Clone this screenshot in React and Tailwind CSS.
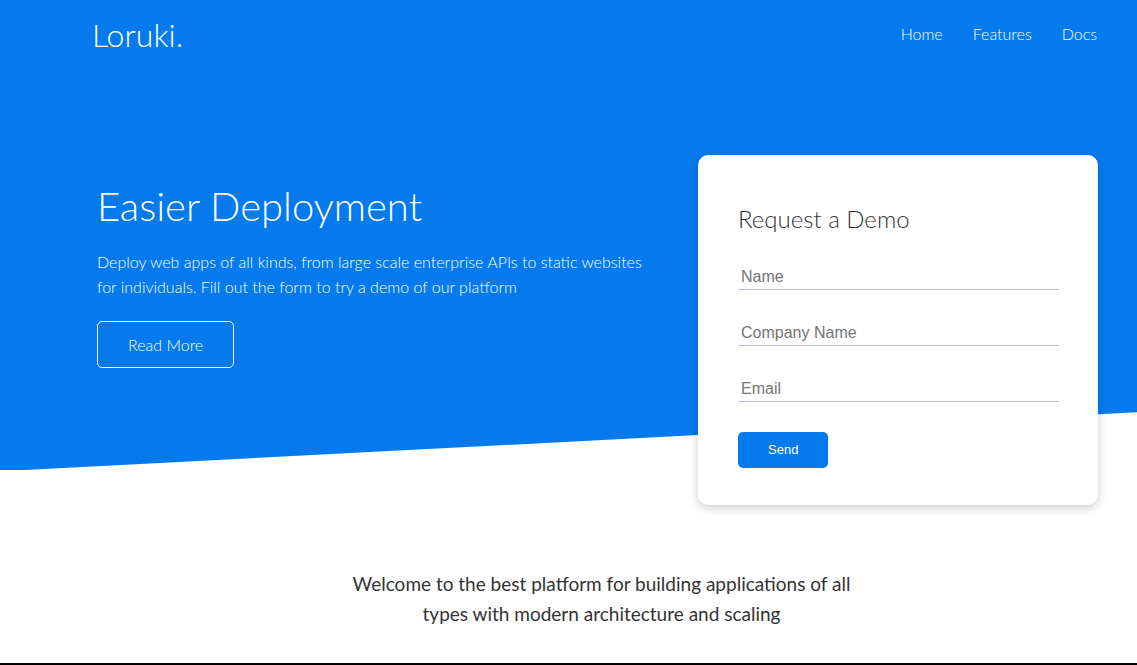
const links = ["Home", "Features", "Docs"];
const fields = [
  { id: "name", label: "Name", type: "text" },
  { id: "company", label: "Company Name", type: "text" },
  { id: "email", label: "Email", type: "email" },
];

function Navbar() {
  return (
    <header className="flex h-[70px] items-center justify-between pr-10 pl-[92px]">
      <h1 className="text-[32px] leading-[38px] font-light">Loruki.</h1>
      <nav>
        <ul className="flex gap-[30px] pb-0.5">
          {links.map((link) => (
            <li key={link}>
              <a href={"#" + link.toLowerCase()} className="text-base font-light">
                {link}
              </a>
            </li>
          ))}
        </ul>
      </nav>
    </header>
  );
}

function DemoForm() {
  return (
    <form
      className="w-[400px] shrink-0 rounded-[10px] bg-white px-10 pt-[49px] pb-[37px] text-[#333] shadow-[0_3px_10px_rgba(0,0,0,0.2)]"
      onSubmit={(e) => e.preventDefault()}
    >
      <h2 className="text-2xl leading-[30px] font-light">Request a Demo</h2>
      <div className="mt-[30px] flex flex-col gap-[30px]">
        {fields.map((field) => (
          <input
            key={field.id}
            id={field.id}
            type={field.type}
            aria-label={field.label}
            placeholder={field.label}
            className="h-[26px] w-full border-b border-[#b4becb] px-[3px] font-['Liberation_Sans',sans-serif] text-base outline-none placeholder:text-[#757575]"
          />
        ))}
      </div>
      <button
        type="submit"
        className="mt-[30px] block h-9 rounded-[5px] bg-[#047aed] px-[30px] font-['Liberation_Sans',sans-serif] text-[13px] text-white"
      >
        Send
      </button>
    </form>
  );
}

function Showcase() {
  return (
    <main className="flex items-start justify-between gap-8 pt-[85px] pr-[39px] pl-[97px]">
      <section className="max-w-[560px] pt-[27px] text-white">
        <h2 className="text-[40px] leading-[48px] font-light">Easier Deployment</h2>
        <p className="mt-[19px] mb-[22px] text-base leading-[25px] font-light">
          Deploy web apps of all kinds, from large scale enterprise APIs to static websites for
          individuals. Fill out the form to try a demo of our platform
        </p>
        <a
          href="#features"
          className="inline-block rounded-[5px] border border-white px-[30px] py-2.5 text-base leading-[25px] font-light"
        >
          Read More
        </a>
      </section>
      <DemoForm />
    </main>
  );
}

export default function App() {
  return (
    <div className="min-h-screen bg-white font-[Lato,sans-serif] text-[#333]">
      <div className="relative isolate">
        <div
          aria-hidden="true"
          className="absolute inset-x-0 top-0 -z-10 h-[470px] bg-[#047aed] [clip-path:polygon(0_0,100%_0,100%_87.7%,2.2%_100%,0_100%)]"
        />
        <div className="text-white">
          <Navbar />
        </div>
        <Showcase />
      </div>
      <section className="pt-16 pb-[34px] pl-[66px]">
        <h3 className="mx-auto max-w-[510px] text-center text-[19px] leading-[30px]">
          Welcome to the best platform for building applications of all types with modern
          architecture and scaling
        </h3>
      </section>
      <div className="h-0.5 bg-black" />
    </div>
  );
}
